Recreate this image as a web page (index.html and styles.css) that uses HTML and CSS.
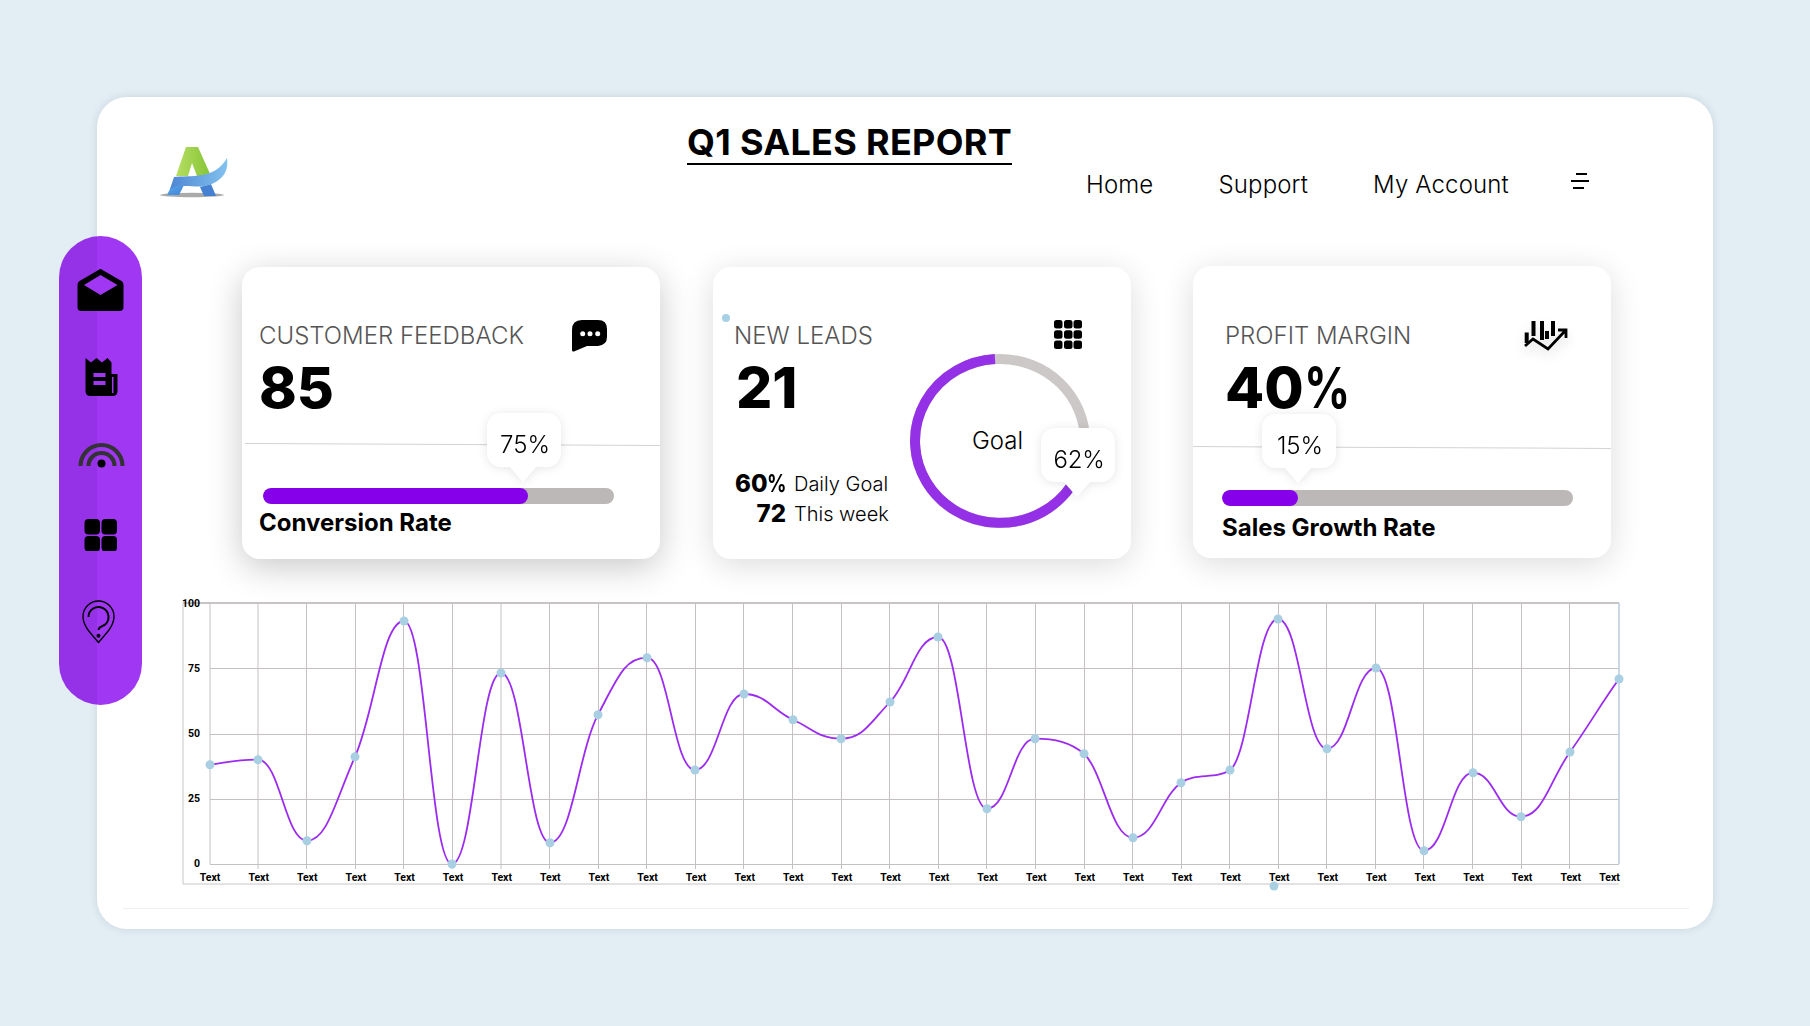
FILE: index.html
```html
<!DOCTYPE html>
<html lang="en">
<head>
<meta charset="utf-8">
<title>Q1 Sales Report</title>
<link rel="stylesheet" href="styles.css">
</head>
<body>
<main class="panel">
  <aside class="sidebar">
    <svg class="side-icon mail" viewBox="75.5 269 50 42"><path d="M100 269 Q101 269 102 270 L121 281 Q123 282 123 285 V307 Q123 311 119 311 H81 Q77 311 77 307 V285 Q77 282 79 281 L98 270 Q99 269 100 269Z"/><path class="cut" d="M100 275 L117 285 L100 295 L83.500 285Z"/></svg>
    <svg class="side-icon note" viewBox="75.5 358 50 38"><path d="M85 358 L90.500 362.500 L96 358 L101.500 362.500 L107 358 L111 362.500 V374 H117 V391 Q117 396 112 396 H90 Q85 396 85 391Z"/><path class="cut" d="M93 373 H105 V377 H93Z M93 381 H105 V385 H93Z M111.500 377 H113 V393 H111.500Z"/></svg>
    <svg class="side-icon wifi" viewBox="75.500 440 50 27"><path class="arc" d="M80 465 A21 21 0 0 1 122 465"/><path class="arc" d="M88 465 A13 13 0 0 1 114 465"/><circle cx="101" cy="462.500" r="4"/></svg>
    <svg class="side-icon apps" viewBox="76.500 519 50 32"><rect x="85" y="519" width="15.500" height="15.500" rx="4"/><rect x="102" y="519" width="15.500" height="15.500" rx="4"/><rect x="85" y="536" width="15.500" height="15.500" rx="4"/><rect x="102" y="536" width="15.500" height="15.500" rx="4"/></svg>
    <svg class="side-icon pin" viewBox="75.500 600 50 44"><path class="thin" d="M98 642.500 C92 635 82.500 627 82.500 616.500 A15.500 15.500 0 0 1 113.500 616.500 C113.500 627 104 635 98 642.500Z"/><path class="thin wide" d="M88 617 A10 10 0 1 1 104 625 C100 627 98 627 98 630"/><circle cx="98" cy="635.700" r="2"/></svg>
  </aside>

  <header class="top">
    <svg class="logo" viewBox="155 140 80 62">
      <defs>
        <linearGradient id="lgGreen" x1="0" x2="1" y1="0" y2="0"><stop offset="0" stop-color="#b5de62"/><stop offset="1" stop-color="#86c436"/></linearGradient>
        <linearGradient id="lgBlue" x1="0" x2="1" y1="0" y2="0"><stop offset="0" stop-color="#4f86d3"/><stop offset="1" stop-color="#82c2ee"/></linearGradient>
        <linearGradient id="lgLeg" x1="0" x2="1" y1="0" y2="1"><stop offset="0" stop-color="#5aa8e8"/><stop offset="1" stop-color="#3f84d8"/></linearGradient>
      </defs>
      <ellipse class="logo-shadow" cx="192" cy="195" rx="32" ry="2.200"/>
      <path fill="url(#lgGreen)" d="M186 147 H198 L211 176 H197 L192 163 L188 176 H176Z"/>
      <path fill="url(#lgLeg)" d="M171 187 L167 195 H179 L184 185Z"/>
      <path fill="#4680d0" d="M200 187 L204 196 H216 L211 184Z"/>
      <path fill="url(#lgBlue)" d="M174 177 C190 175 215 180 227 158 C229 172 222 182 205 186 C195 188 180 183 170 189Z"/>
    </svg>
    <h1 class="title">Q1 SALES REPORT</h1>
    <nav class="nav">
      <a class="nav-link">Home</a>
      <a class="nav-link">Support</a>
      <a class="nav-link">My Account</a>
      <svg class="menu" viewBox="0 0 18 16"><path d="M5 1 H16 M0 8 H18 M2 15 H13"/></svg>
    </nav>
  </header>

  <section class="cards">
    <article class="card card-one">
      <div class="card-head">
        <h2 class="card-label">CUSTOMER FEEDBACK</h2>
        <svg class="card-icon icon-chat" viewBox="572 319 35 33"><path d="M572 330 Q572 320 582 320 H598 Q607 320 607 329 V337 Q607 345 598 346 H587 L574 351.500 Q572 352 572 350Z"/><circle class="dot-w" cx="582.700" cy="333.700" r="2.500"/><circle class="dot-w" cx="590" cy="333.700" r="2.500"/><circle class="dot-w" cx="597.700" cy="333.700" r="2.500"/></svg>
      </div>
      <div class="card-value">85</div>
      <div class="divider"></div>
      <div class="bar"><div class="bar-fill fill-75"></div></div>
      <div class="bar-label">Conversion Rate</div>
      <div class="tip tip-one">75%</div>
    </article>

    <article class="card card-two">
      <span class="stray-dot"></span>
      <div class="card-head">
        <h2 class="card-label">NEW LEADS</h2>
        <svg class="card-icon icon-grid" viewBox="0 0 28 29"><rect width="8.500" height="8.500" rx="2.500"/><rect x="10" width="8.500" height="8.500" rx="2.500"/><rect x="19.500" width="8.500" height="8.500" rx="2.500"/><rect y="10.200" width="8.500" height="8.500" rx="2.500"/><rect x="10" y="10.200" width="8.500" height="8.500" rx="2.500"/><rect x="19.500" y="10.200" width="8.500" height="8.500" rx="2.500"/><rect y="20.500" width="8.500" height="8.500" rx="2.500"/><rect x="10" y="20.500" width="8.500" height="8.500" rx="2.500"/><rect x="19.500" y="20.500" width="8.500" height="8.500" rx="2.500"/></svg>
      </div>
      <div class="lead-body">
        <div class="lead-left">
          <div class="card-value lead-value">21</div>
          <dl class="stats">
            <dt class="stat-num">60<span class="pct">%</span></dt><dd class="stat-text">Daily Goal</dd>
            <dt class="stat-num">72</dt><dd class="stat-text">This week</dd>
          </dl>
        </div>
        <div class="donut">
          <svg class="donut-svg" viewBox="910 354 185 174">
            <ellipse class="donut-track" cx="1000" cy="441" rx="85" ry="82"/>
            <path class="donut-value" d="M1071 486 A85 82 0 1 1 995 359"/>
          </svg>
          <span class="donut-text">Goal</span>
        </div>
      </div>
      <div class="tip tip-two">62%</div>
    </article>

    <article class="card card-three">
      <div class="card-head">
        <h2 class="card-label">PROFIT MARGIN</h2>
        <svg class="card-icon icon-trend" viewBox="1525 321 42 30"><path class="trend-bars" d="M1526.700 333.500 V344 M1533.500 322 V337 M1542 322 V341 M1547 332 V340 M1553 322 V337"/><path class="trend-line" d="M1525 347 L1533 340 L1548 350 L1565 332 M1558 331 H1566 V339"/></svg>
      </div>
      <div class="card-value">40<span class="pct">%</span></div>
      <div class="divider"></div>
      <div class="bar"><div class="bar-fill fill-22"></div></div>
      <div class="bar-label">Sales Growth Rate</div>
      <div class="tip tip-three">15%</div>
    </article>
  </section>

  <svg class="chart" viewBox="170 590 1470 315">
    <path class="frame" d="M183 603 V884 H1619"/>
    <path class="top-rule" d="M183 603 H1619"/>
    <path class="grid" d="M210 603 V864 M258 603 V869 M306.500 603 V869 M355.500 603 V869 M403.500 603 V869 M452.500 603 V869 M501 603 V869 M549.500 603 V869 M598.500 603 V869 M646.500 603 V869 M695.500 603 V869 M743.500 603 V869 M792.500 603 V869 M841.500 603 V869 M889.500 603 V869 M938.500 603 V869 M986.500 603 V869 M1035.500 603 V869 M1084.500 603 V869 M1132.500 603 V869 M1181.500 603 V869 M1229.500 603 V869 M1278.500 603 V869 M1326.500 603 V869 M1375.500 603 V869 M1423.500 603 V869 M1472.500 603 V869 M1521.500 603 V869 M1569.500 603 V869"/>
    <path class="grid" d="M210 668.500 H1619 M210 734.500 H1619 M210 799.500 H1619 M210 864.500 H1619"/>
    <path class="right-rule" d="M1619 603 V864"/>
    <text class="y-label" x="200" y="607">100</text>
    <text class="y-label" x="200" y="672">75</text>
    <text class="y-label" x="200" y="737">50</text>
    <text class="y-label" x="200" y="802">25</text>
    <text class="y-label" x="200" y="867">0</text>
    <path class="line" d="M210 764.700 C230 762 238 759.700 258 759.700 C280 759.700 285 840.700 307 840.700 C327 840.700 335 802 355 756.700 C375 712 382 621 404 621 C426 621 430 864 452 864 C474 864 479 673 501 673 C523 673 528 842.700 550 842.700 C572 842.700 578 752.700 598 714.700 C618 676.700 625 657.700 647 657.700 C669 657.700 673 770 695 770 C717 770 722 694 744 694 C766 694 773 710.700 793 719.700 C813 728.700 819 738.700 841 738.700 C863 738.700 870 723 890 702 C910 681 916 637 938 637 C960 637 965 808.700 987 808.700 C1009 808.700 1013 738.700 1035 738.700 C1055 738.700 1070 742 1084 753.700 C1104 773 1111 837.700 1133 837.700 C1155 837.700 1161 797 1181 782.700 C1196 772 1215 780 1230 770 C1250 756 1256 619 1278 619 C1300 619 1305 748.700 1327 748.700 C1349 748.700 1354 668 1376 668 C1398 668 1402 850.700 1424 850.700 C1446 850.700 1451 772.700 1473 772.700 C1495 772.700 1499 816.700 1521 816.700 C1543 816.700 1550 780 1570 752 C1590 724 1600 705 1619 679"/>
    <g class="dots">
      <circle cx="210" cy="764.700" r="4"/><circle cx="258" cy="759.700" r="4"/><circle cx="307" cy="840.700" r="4"/><circle cx="355" cy="756.700" r="4"/><circle cx="404" cy="621" r="4"/><circle cx="452" cy="864" r="4"/><circle cx="501" cy="673" r="4"/><circle cx="550" cy="842.700" r="4"/><circle cx="598" cy="714.700" r="4"/><circle cx="647" cy="657.700" r="4"/><circle cx="695" cy="770" r="4"/><circle cx="744" cy="694" r="4"/><circle cx="793" cy="719.700" r="4"/><circle cx="841" cy="738.700" r="4"/><circle cx="890" cy="702" r="4"/><circle cx="938" cy="637" r="4"/><circle cx="987" cy="808.700" r="4"/><circle cx="1035" cy="738.700" r="4"/><circle cx="1084" cy="753.700" r="4"/><circle cx="1133" cy="837.700" r="4"/><circle cx="1181" cy="782.700" r="4"/><circle cx="1230" cy="770" r="4"/><circle cx="1278" cy="619" r="4"/><circle cx="1327" cy="748.700" r="4"/><circle cx="1376" cy="668" r="4"/><circle cx="1424" cy="850.700" r="4"/><circle cx="1473" cy="772.700" r="4"/><circle cx="1521" cy="816.700" r="4"/><circle cx="1570" cy="752" r="4"/><circle cx="1619" cy="679" r="4"/>
      <circle cx="1274" cy="886" r="4"/>
    </g>
    <g class="x-labels">
      <text x="210" y="881">Text</text><text x="258.700" y="881">Text</text><text x="307.200" y="881">Text</text><text x="355.900" y="881">Text</text><text x="404.500" y="881">Text</text><text x="453.100" y="881">Text</text><text x="501.700" y="881">Text</text><text x="550.300" y="881">Text</text><text x="598.900" y="881">Text</text><text x="647.500" y="881">Text</text><text x="696" y="881">Text</text><text x="744.700" y="881">Text</text><text x="793.300" y="881">Text</text><text x="841.900" y="881">Text</text><text x="890.500" y="881">Text</text><text x="939" y="881">Text</text><text x="987.600" y="881">Text</text><text x="1036.200" y="881">Text</text><text x="1084.800" y="881">Text</text><text x="1133.400" y="881">Text</text><text x="1182" y="881">Text</text><text x="1230.600" y="881">Text</text><text x="1279.200" y="881">Text</text><text x="1327.800" y="881">Text</text><text x="1376.300" y="881">Text</text><text x="1424.900" y="881">Text</text><text x="1473.500" y="881">Text</text><text x="1522.100" y="881">Text</text><text x="1570.700" y="881">Text</text><text x="1609.500" y="881">Text</text>
    </g>
  </svg>
  <div class="foot-rule"></div>
</main>
</body>
</html>
```

FILE: styles.css
```css
* { box-sizing: border-box; }
html, body { margin: 0; height: 100%; }
body {
  background: #e2edf4;
  font-family: "Inter", "Liberation Sans", sans-serif;
  color: #000;
  padding: 97px 0 0 97px;
  overflow: hidden;
}
.panel {
  position: relative;
  width: 1616px;
  height: 832px;
  background: #fff;
  border-radius: 30px;
  box-shadow: 0 0 8px rgba(60, 70, 80, .14);
  display: flex;
  flex-direction: column;
}

/* sidebar */
.sidebar {
  position: absolute;
  left: -38px;
  top: 139px;
  width: 83px;
  height: 469px;
  border-radius: 42px;
  background: linear-gradient(90deg, #9532e8 38px, #a037f2 38px);
  padding-top: 33px;
  display: grid;
  grid-template-rows: 89px 83px 78px 81px 44px;
  justify-items: center;
  align-items: start;
  z-index: 2;
}
.side-icon { width: 50px; display: block; }
.mail { height: 42px; }
.note { height: 38px; }
.wifi { height: 27px; }
.apps { height: 32px; }
.pin { height: 44px; }
.cut { fill: #a037f2; }
.arc { fill: none; stroke: #333; stroke-width: 4.2; }
.thin { fill: none; stroke: #000; stroke-width: 1.4; }
.wide { stroke-width: 2; }

/* header */
.top {
  height: 170px;
  display: flex;
  align-items: flex-start;
  flex: none;
}
.logo { width: 80px; height: 62px; margin: 43px 0 0 58px; flex: none; }
.logo-shadow { fill: #8d8d8d; opacity: .75; }
.title {
  margin: 24px 0 0 452px;
  font-size: 36px;
  line-height: 42px;
  font-weight: 700;
  letter-spacing: .3px;
  border-bottom: 2.5px solid #000;
  white-space: nowrap;
}
.nav { display: flex; align-items: flex-start; margin: 73px 0 0 74px; }
.nav-link { font-size: 24px; line-height: 30px; font-weight: 300; letter-spacing: .15px; margin-right: 65px; white-space: nowrap; }
.menu { width: 18px; height: 16px; margin: 3px 0 0 -3px; fill: none; stroke: #000; stroke-width: 2; flex: none; }

/* cards */
.cards { display: flex; align-items: flex-start; padding-left: 145px; flex: none; }
.card {
  position: relative;
  flex: none;
  width: 418px;
  height: 292px;
  border-radius: 18px;
  background: #fff;
  padding-top: 54px;
  box-shadow: 0 6px 32px rgba(0, 0, 0, .14);
}
.card-one { padding-left: 17px; box-shadow: 0 8px 34px rgba(0, 0, 0, .22); }
.card-two { margin-left: 53px; padding-left: 21px; }
.card-three { margin: -1px 0 0 62px; height: 292px; padding: 55px 0 0 32px; }
.card-head { display: flex; justify-content: space-between; height: 30px; }
.card-one .card-head { padding-right: 53px; }
.card-two .card-head { padding-right: 49px; }
.card-three .card-head { padding-right: 44px; }
.card-label { margin: 0; font-size: 24px; line-height: 30px; font-weight: 300; color: #555; white-space: nowrap; }
.card-icon { flex: none; display: block; margin-top: -2px; }
.icon-chat { width: 35px; height: 33px; }
.icon-grid { width: 28px; height: 29px; margin-top: -1px; }
.icon-trend { width: 42px; height: 30px; margin-top: -1px; overflow: visible; filter: drop-shadow(0 6px 6px rgba(0, 0, 0, .12)); }
.dot-w { fill: #fff; }
.trend-bars { fill: none; stroke: #000; stroke-width: 4; }
.trend-line { fill: none; stroke: #000; stroke-width: 2.800; }
.card-value { margin-top: 7px; font-size: 57px; line-height: 60px; font-weight: 800; }
.pct { display: inline-block; font-weight: 700; margin-right: -.2em; transform: scaleX(.8); transform-origin: left center; }
.divider { height: 1px; margin: 26px 0 0 -14px; background: #d4d2d4; transform: rotate(.27deg); }
.card-three .divider { margin: 29px 0 0 -32px; }
.bar { width: 351px; height: 16px; margin: 43px 0 0 4px; border-radius: 8px; background: #bdb8b8; overflow: hidden; }
.card-three .bar { margin: 42px 0 0 -3px; }
.bar-fill { height: 100%; border-radius: 8px; background: #8600ea; }
.fill-75 { width: 75.600%; }
.fill-22 { width: 21.600%; }
.bar-label { margin-top: 4px; font-size: 24px; line-height: 30px; font-weight: 700; white-space: nowrap; }
.card-three .bar-label { margin: 7px 0 0 -3px; }

/* tooltips */
.tip {
  position: absolute;
  width: 74px;
  height: 54px;
  padding: 9px 0 0 2px;
  border-radius: 14px;
  background: #fff;
  font-size: 24px;
  font-weight: 300;
  line-height: 46px;
  text-align: center;
  filter: drop-shadow(0 1px 5px rgba(0, 0, 0, .1));
  z-index: 1;
}
.tip::after {
  content: "";
  position: absolute;
  top: 53px;
  left: 22px;
  width: 28px;
  height: 16px;
  background: #fff;
  clip-path: polygon(0 0, 100% 0, 50% 100%);
}
.tip-one { left: 245px; top: 146px; }
.tip-two { left: 328px; top: 161px; letter-spacing: -.3px; }
.tip-three { left: 69px; top: 148px; }

/* leads */
.stray-dot { position: absolute; left: 9px; top: 47px; width: 8px; height: 8px; border-radius: 50%; background: #a8d0e4; }
.lead-body { display: flex; align-items: flex-start; margin-top: 3px; }
.lead-left { width: 176px; flex: none; }
.lead-value { margin: 4px 0 0 2px; }
.stats { margin: 51px 0 0 1px; display: grid; grid-template-columns: 51px auto; column-gap: 8px; justify-content: start; }
.stat-num { font-size: 24px; line-height: 30px; font-weight: 800; text-align: right; white-space: nowrap; }
.stat-text { margin: 0; font-size: 20px; line-height: 30px; font-weight: 300; white-space: nowrap; }
.donut { position: relative; width: 185px; height: 174px; flex: none; }
.donut-svg { width: 185px; height: 174px; display: block; }
.donut-track { fill: none; stroke: #cdc8c8; stroke-width: 10; }
.donut-value { fill: none; stroke: #9430e6; stroke-width: 10; }
.donut-text { position: absolute; left: 62px; top: 72px; font-size: 24px; line-height: 30px; font-weight: 300; }

/* chart */
.chart { width: 1470px; height: 315px; margin: 31px 0 0 73px; display: block; flex: none; overflow: visible; }
.frame { fill: none; stroke: #c8c5c8; stroke-width: 1; }
.top-rule { fill: none; stroke: #c8c4c6; stroke-width: 2; }
.grid { fill: none; stroke: #c4c0c4; stroke-width: 1; }
.right-rule { fill: none; stroke: #b9cbdc; stroke-width: 1.5; }
.y-label { font-family: "Roboto", sans-serif; font-size: 10.500px; font-weight: 700; text-anchor: end; }
.x-labels text { font-family: "Roboto", sans-serif; font-size: 10.500px; font-weight: 700; text-anchor: middle; }
.line { fill: none; stroke: #9c2bf0; stroke-width: 1.800; }
.dots circle { fill: #a9cfe2; r: 4.500px; }
.foot-rule { height: 1px; margin: 3px 24px 0 26px; background: #f0f0f2; flex: none; }
```
